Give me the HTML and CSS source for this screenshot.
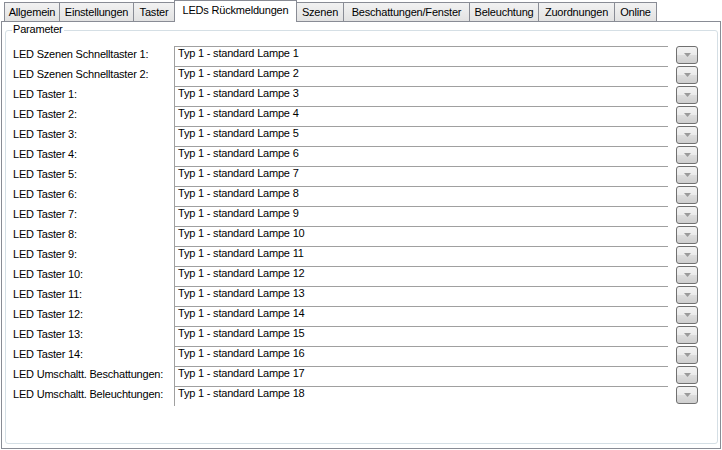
FILE: index.html
```html
<!DOCTYPE html>
<html lang="de">
<head>
  <meta charset="UTF-8">
  <title>LEDs Rückmeldungen</title>
  <link rel="stylesheet" href="styles.css">
</head>
<body>
  <!-- Reiter -->
  <div class="tabs">
    <div class="tab">Allgemein</div>
    <div class="tab">Einstellungen</div>
    <div class="tab">Taster</div>
    <div class="tab active">LEDs Rückmeldungen</div>
    <div class="tab">Szenen</div>
    <div class="tab">Beschattungen/Fenster</div>
    <div class="tab">Beleuchtung</div>
    <div class="tab">Zuordnungen</div>
    <div class="tab">Online</div>
  </div>

  <div class="panel">
    <div class="group">
      <span class="group-title">Parameter</span>
      <div class="rows" id="rows"></div>
    </div>
  </div>

  <script>
    // Beschriftungen der Zeilen
    const labels = [
      'LED Szenen Schnelltaster 1:',
      'LED Szenen Schnelltaster 2:',
      'LED Taster 1:', 'LED Taster 2:', 'LED Taster 3:', 'LED Taster 4:',
      'LED Taster 5:', 'LED Taster 6:', 'LED Taster 7:', 'LED Taster 8:',
      'LED Taster 9:', 'LED Taster 10:', 'LED Taster 11:', 'LED Taster 12:',
      'LED Taster 13:', 'LED Taster 14:',
      'LED Umschaltt. Beschattungen:',
      'LED Umschaltt. Beleuchtungen:'
    ];

    const rows = document.getElementById('rows');
    labels.forEach((text, i) => {
      const row = document.createElement('div');
      row.className = 'row';
      row.innerHTML =
        '<span class="label">' + text + '</span>' +
        '<span class="field">Typ 1 - standard Lampe ' + (i + 1) + '</span>' +
        '<button class="drop"><svg width="7" height="4" viewBox="0 0 7 4">' +
        '<polygon points="0,0 7,0 3.5,4" fill="#9a9a9a"/></svg></button>';
      rows.appendChild(row);
    });
  </script>
</body>
</html>
```

FILE: styles.css
```css
body {
  margin: 0;
  background: #fff;
  font-family: 'Liberation Sans', Arial, sans-serif;
  font-size: 11px;
  letter-spacing: -0.2px;
  color: #000;
}

/* Reiterleiste */
.tabs {
  display: flex;
  align-items: flex-end;
  height: 21px;
  padding-left: 4px;
  position: relative;
  z-index: 1;
}

.tab {
  box-sizing: border-box;
  height: 19px;
  margin-left: -1px;
  border: 1px solid #898c95;
  border-bottom: none;
  background: linear-gradient(#f2f2f2, #e2e2e2);
  text-align: center;
  line-height: 18px;
  white-space: nowrap;
}

.tab:first-child { margin-left: 0; width: 56px; }
.tab:nth-child(2) { width: 75px; }
.tab:nth-child(3) { width: 42px; }
.tab:nth-child(4) { width: 123px; }
.tab:nth-child(5) { width: 48px; }
.tab:nth-child(6) { width: 127px; }
.tab:nth-child(7) { width: 70px; }
.tab:nth-child(8) { width: 77px; }
.tab:nth-child(9) { width: 43px; }

.tab.active {
  height: 22px;
  margin-bottom: -1px;
  background: #fff;
  position: relative;
  z-index: 2;
  line-height: 18px;
}

/* Inhaltsbereich */
.panel {
  box-sizing: border-box;
  width: 720px;
  height: 428px;
  margin-left: 1px;
  padding: 8px 2px 4px 3px;
  border: 1px solid #898c95;
  background: #fff;
}

.group {
  box-sizing: border-box;
  position: relative;
  width: 713px;
  height: 414px;
  padding: 15px 0 0 7px;
  border: 1px solid #d5dfe5;
  border-radius: 3px;
}

.group-title {
  position: absolute;
  top: -8px;
  left: 6px;
  padding: 0 1px;
  background: #fff;
  line-height: 13px;
}

.row {
  display: flex;
  height: 20px;
}

.label {
  width: 161px;
  padding-top: 2px;
  line-height: 13px;
  white-space: nowrap;
}

.field {
  box-sizing: border-box;
  width: 494px;
  height: 20px;
  padding-left: 3px;
  border-top: 1px solid #a0a0a0;
  border-left: 1px solid #a0a0a0;
  background: #fff;
  line-height: 13px;
  white-space: nowrap;
}

.drop {
  box-sizing: border-box;
  width: 22px;
  height: 18px;
  margin-left: 8px;
  padding: 0;
  border: 1px solid #707070;
  border-radius: 3px;
  background: linear-gradient(#f2f2f2, #ebebeb 50%, #dddddd 50%, #cfcfcf);
  display: flex;
  align-items: center;
  justify-content: center;
}
```
